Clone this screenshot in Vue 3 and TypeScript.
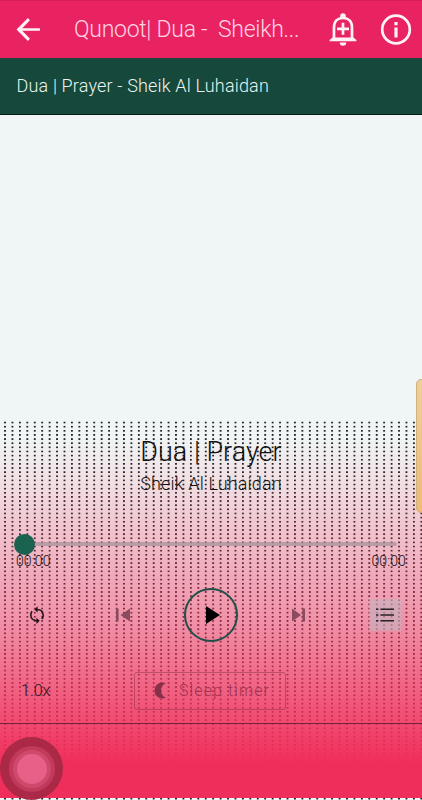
<script setup lang="ts">
import { ref } from 'vue'

const pageTitle = ref('Qunoot| Dua -  Sheikh...')
const trackTitle = ref('Dua | Prayer')
const artist = ref('Sheik Al Luhaidan')
const elapsed = ref('00:00')
const duration = ref('00:00')
const speed = ref('1.0x')
</script>

<template>
  <main class="screen">
    <header class="appbar">
      <svg class="back" viewBox="0 0 24 24"><path d="M23 10.7v2.6H6l7.4 7.6-2 2.1L.5 12 11.4 1l2 2.1L6 10.7z" /></svg>
      <h1>{{ pageTitle }}</h1>
      <svg class="bell" viewBox="0 0 28 34">
        <path class="fill" d="M11.2 4V3a2.8 2.8 0 0 1 5.6 0v1zM10.8 29.5h6.4a3.2 3.2 0 0 1-6.4 0z" />
        <path class="line" d="M5 26V14.5C5 8.5 8.6 5 14 5s9 3.5 9 9.5V26" />
        <path class="fill" d="M3.6 24.6h20.8l3 2.4v1.2H.6V27z" />
        <path class="line" d="M14 9.8v12M8 15.8h12" />
      </svg>
      <svg class="info" viewBox="0 0 32 32">
        <circle class="line" cx="16" cy="15.5" r="13.8" />
        <path class="fill" d="M14.4 8h3.2v3.3h-3.2zM14.4 13.5h3.2v10h-3.2z" />
      </svg>
    </header>
    <div class="now">{{ trackTitle }} - {{ artist }}</div>
    <div class="blank"></div>
    <section class="player">
      <svg class="dots">
        <defs>
          <pattern id="dot-grid" x="4.1" y="0.7" width="7.434" height="4.133" patternUnits="userSpaceOnUse">
            <rect width="1.8" height="1.7" fill="#1c1c1f" />
          </pattern>
        </defs>
        <rect width="100%" height="100%" fill="url(#dot-grid)" />
      </svg>
      <div class="tint"></div>
      <div class="content">
        <h2>{{ trackTitle }}</h2>
        <p class="artist">{{ artist }}</p>
        <div class="seek"><i class="knob"></i><i class="rail"></i></div>
        <div class="times"><span>{{ elapsed }}</span><span>{{ duration }}</span></div>
        <div class="controls">
          <svg class="loop" viewBox="0 0 16 18">
            <path d="M8 3.5c4.2 0 6.2 2.6 6.2 5.7 0 1.6-.5 2.9-1.3 3.9M8 14.7c-4 0-6.2-2.6-6.2-5.7 0-1.5.5-2.8 1.3-3.8" />
            <path class="solid" d="M8.6.3v6.2L5.3 3.4zM7.4 11.7v6.2l3.3-3.1z" />
          </svg>
          <svg class="skip prev" viewBox="0 0 15 14"><path d="M0 .5h2.6v13H0zM14 .5v13L4.5 7z" /></svg>
          <button class="play"><svg viewBox="0 0 14 18"><path d="M0 0v18l14-9z" /></svg></button>
          <svg class="skip next" viewBox="0 0 15 14"><path d="M11.4.5H14v13h-2.6zM1 .5v13L10 7z" /></svg>
          <button class="list">
            <svg viewBox="0 0 18 14"><path d="M0 1.2h2.4M4.4 1.2H18M0 7h2.4M4.4 7H18M0 12.8h2.4M4.4 12.8H18" /></svg>
          </button>
        </div>
        <div class="options">
          <span class="speed">{{ speed }}</span>
          <button class="sleep">
            <svg viewBox="0 0 12 17"><path d="M11.8 1.2C10.800.7 9.700.4 8.500.4a8.100 8.100 0 0 0 0 16.2c1.200 0 2.300-.3 3.300-.8C8.800 14.500 7 11.700 7 8.500s1.800-6 4.800-7.300z" /></svg>
            <span>Sleep timer</span>
          </button>
        </div>
      </div>
    </section>
    <div class="edge-tab"></div>
    <div class="assist"><i><b></b></i></div>
  </main>
</template>

<style>
body { margin: 0; }
</style>

<style scoped>
* { box-sizing: border-box; }
.screen { position: relative; width: 422px; height: 800px; overflow: hidden; display: flex; flex-direction: column; background: #f0f6f5; font-family: Roboto, "Liberation Sans", sans-serif; font-weight: 300; color: #111; }
.appbar { height: 58px; flex: none; display: flex; align-items: center; background: #e92362; border-top: 1px solid #d5205a; }
.back { width: 25px; height: 25px; margin-left: 16px; fill: #fff2f7; }
h1 { margin: 0 0 0 33px; width: 256px; font-size: 23px; font-weight: 300; line-height: 30px; letter-spacing: -.28px; color: #ffd3e2; white-space: pre; }
.bell { width: 28px; height: 34px; flex: none; margin-left: -1px; }
.info { width: 32px; height: 32px; flex: none; margin-left: 23px; }
.fill { fill: #fff2f7; }
.line { fill: none; stroke: #fff2f7; stroke-width: 2.7; }
.now { height: 57px; flex: none; padding-left: 16.5px; line-height: 56px; font-size: 18px; letter-spacing: .17px; background: #16483c; border-bottom: 1px solid #041a14; color: #e9f5f0; }
.blank { height: 306px; flex: none; }
.player { position: relative; height: 379px; flex: none; }
.dots { position: absolute; inset: 0; width: 100%; height: 100%; }
.tint { position: absolute; inset: 0 0 2px; background: linear-gradient(rgba(240, 45, 90, 0) 15px, rgba(240, 45, 90, .12) 65px, rgba(240, 45, 90, .35) 144px, rgba(240, 45, 90, .5) 200px, rgba(240, 45, 90, .8) 285px, #f02e5b 342px); }
.content { position: relative; height: 303px; display: flex; flex-direction: column; border-bottom: 1px solid #702039; }
h2 { margin: 14px 0 0; text-align: center; font-size: 27px; line-height: 34px; font-weight: 300; }
.artist { margin: 3px 0 0; text-align: center; font-size: 18px; line-height: 23px; letter-spacing: .16px; }
.seek { margin: 38px 25px 0 14px; height: 22px; display: flex; align-items: center; }
.knob { width: 21px; height: 21px; border-radius: 50%; background: #1b6250; }
.rail { flex: 1; height: 4px; border-radius: 2px; background: rgba(165, 145, 152, .72); }
.times { display: flex; justify-content: space-between; margin-top: -1px; padding: 0 16px; font-size: 14px; line-height: 14px; letter-spacing: .1px; }
.controls { margin-top: 20px; height: 54px; display: flex; align-items: center; }
.loop { width: 16px; height: 18px; margin-left: 29px; fill: none; stroke: #201519; stroke-width: 1.6; }
.solid { fill: #201519; stroke: none; }
.skip { width: 15px; height: 14px; fill: #894b60; }
.prev { margin-left: 71px; }
.next { margin-left: 53px; }
button { font: inherit; padding: 0; border: 0; background: none; }
.play { width: 54px; height: 54px; margin-left: 53px; border: 2px solid #204e48; border-radius: 50%; display: flex; align-items: center; justify-content: center; }
.play svg { width: 14px; height: 18px; margin-left: 3px; fill: #000; }
.list { width: 32px; height: 32px; margin-left: 63px; display: flex; align-items: center; justify-content: center; background: rgba(195, 180, 192, .6); }
.list svg { width: 18px; height: 14px; stroke: #2a2226; stroke-width: 1.5; }
.options { margin-top: 30px; height: 38px; display: flex; align-items: center; }
.speed { width: 113px; margin-left: 21px; padding-bottom: 1px; font-size: 16px; color: #25111a; }
.sleep { width: 152px; height: 38px; display: flex; align-items: center; padding: 0 0 1px 19px; border: 1px solid rgba(115, 35, 60, .4); border-radius: 3px; color: #9c3552; font-size: 16px; letter-spacing: 1.1px; }
.sleep svg { width: 12px; height: 17px; margin-right: 13px; fill: #87304a; }
.edge-tab { position: absolute; top: 379px; right: -5px; width: 11px; height: 134px; border-radius: 5px; border: 1px solid #ceb17c; background: linear-gradient(#f1cf98, #efba75); }
.assist { position: absolute; left: 0; top: 737px; width: 63px; height: 63px; border-radius: 50%; display: flex; align-items: center; justify-content: center; background: #ab2947; }
.assist i { width: 46px; height: 46px; border-radius: 50%; border: 4px solid #c13a5b; display: flex; align-items: center; justify-content: center; background: #cf496d; }
.assist b { width: 30px; height: 30px; border-radius: 50%; background: #e86088; }
</style>
